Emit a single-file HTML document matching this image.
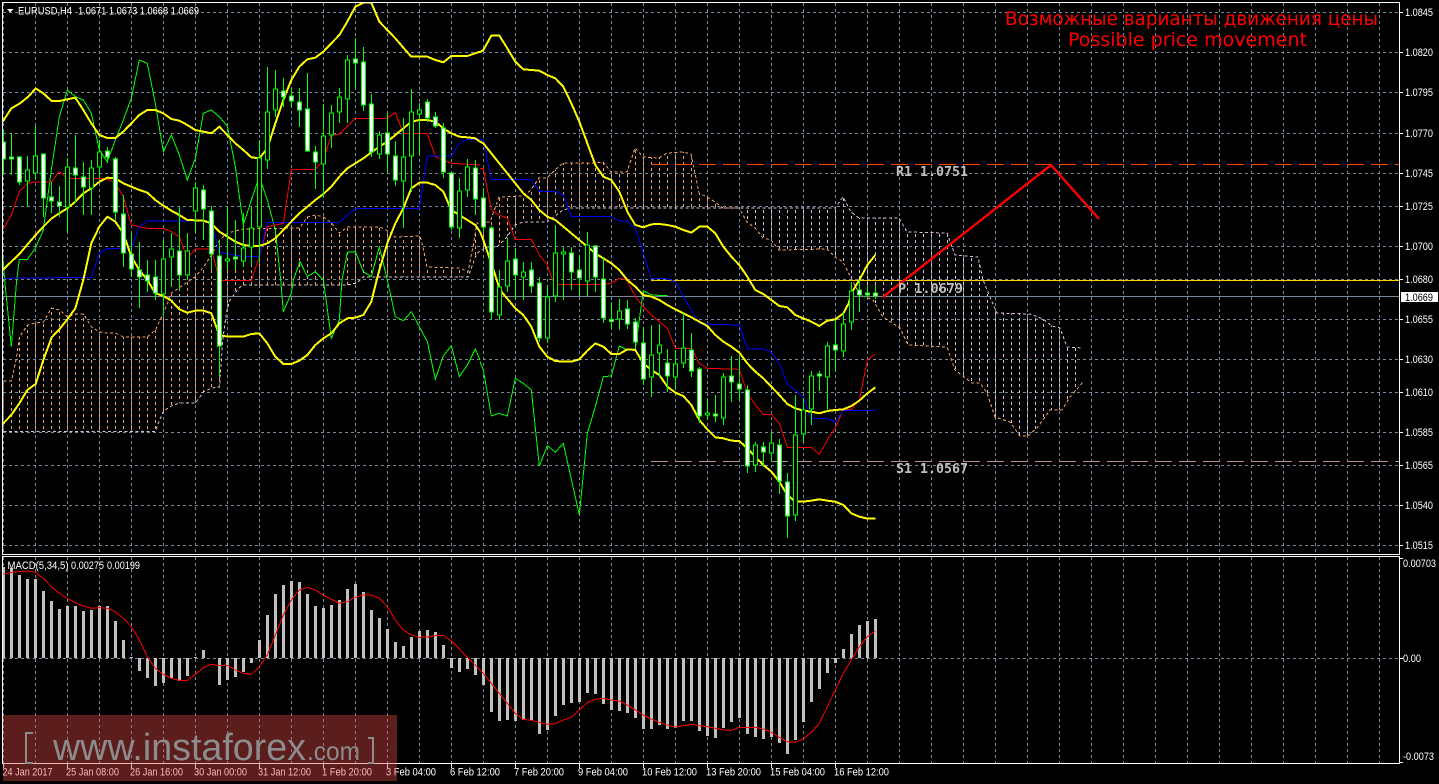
<!DOCTYPE html>
<html><head><meta charset="utf-8"><title>EURUSD,H4</title>
<style>
html,body{margin:0;padding:0;background:#000;width:1439px;height:784px;overflow:hidden}
svg{display:block}
text{font-family:"Liberation Sans",sans-serif;font-size:11px;fill:#fff}
.m{font-family:"DejaVu Sans Mono","Liberation Mono",monospace;font-size:13.5px;font-weight:bold;fill:#c0c0c0}
.big{font-family:"DejaVu Sans","Liberation Sans",sans-serif;font-size:19px;fill:#f00}
.wm{fill:#8c8c8c}
</style></head><body>
<svg width="1439" height="784" viewBox="0 0 1439 784" xmlns="http://www.w3.org/2000/svg">
<defs>
<pattern id="ho" x="0" y="0" width="8" height="6" patternUnits="userSpaceOnUse"><rect x="3" y="0" width="1" height="3" fill="#f4a460"/></pattern>
<pattern id="ht" x="0" y="0" width="8" height="6" patternUnits="userSpaceOnUse"><rect x="3" y="0" width="1" height="3" fill="#d8bfd8"/></pattern>
<clipPath id="c1"><rect x="3" y="3" width="1396" height="551"/></clipPath>
<clipPath id="c2"><rect x="3" y="557" width="1396" height="206"/></clipPath>
</defs>
<rect width="1439" height="784" fill="#000"/>

<!-- main panel -->
<g clip-path="url(#c1)">
<!-- grid -->
<path stroke="#778899" stroke-dasharray="3 3" fill="none" d="M3 12.5H1399M3 52.5H1399M3 92.5H1399M3 133.5H1399M3 173.5H1399M3 206.5H1399M3 246.5H1399M3 279.5H1399M3 319.5H1399M3 359.5H1399M3 392.5H1399M3 432.5H1399M3 465.5H1399M3 505.5H1399M3 545.5H1399"/>
<path stroke="#778899" stroke-dasharray="3 3" fill="none" d="M3.5 3V554M35.5 3V554M67.5 3V554M99.5 3V554M131.5 3V554M163.5 3V554M195.5 3V554M227.5 3V554M259.5 3V554M291.5 3V554M323.5 3V554M355.5 3V554M387.5 3V554M419.5 3V554M451.5 3V554M483.5 3V554M515.5 3V554M547.5 3V554M579.5 3V554M611.5 3V554M643.5 3V554M675.5 3V554M707.5 3V554M739.5 3V554M771.5 3V554M803.5 3V554M835.5 3V554M867.5 3V554M899.5 3V554M931.5 3V554M963.5 3V554M995.5 3V554M1027.5 3V554M1059.5 3V554M1091.5 3V554M1123.5 3V554M1155.5 3V554M1187.5 3V554M1219.5 3V554M1251.5 3V554M1283.5 3V554M1315.5 3V554M1347.5 3V554M1379.5 3V554"/>

<!-- cloud section 1 -->
<polygon fill="url(#ho)" points="3.5,381 11.5,381 16,360 19.5,337 27.5,325 35.5,323 43.5,322 51.5,308 59.5,310 67.5,317 75.5,314 83.5,314 91.5,327 99.5,332 107.5,333 115.5,333 123.5,337 147.5,337 155.5,330 163.5,313 171.5,293 195,277 203.5,267 211.5,255 219.5,240 227.5,233 243.5,229 299.5,228 307.5,217 315.5,215 323.5,217 331.5,223 339.5,233 347.5,227 380,227 390,232 395,237 420,236 423,247 427,267 460,268 468,272 473,247 477,223 490,222 499,197 523,196 531,190 539,178 547,178 555,170 563,163 595,163 603,162 611,172 627,172 635,148 643,157 659,158 667,153 683,152 691,154 699,193 707,197 715,202 723,208 739,208 571,208 563,210 547,222 523,222 515,225 507,237 497,247 487,247 477,253 468,277 363,277 357,283 347,285 243,285 239,288 230,300 227,310 223,337 219.5,387 211.5,388 203.5,392 195.5,403 179.5,403 171.5,406 163.5,411 155,431.5 3.5,431.5"/>
<!-- cloud section 2 -->
<polygon fill="url(#ht)" points="739,208 835,208 843,197 851,212 859,218 899,218 907,232 947,233 955,255 978,257 983,280 990,297 997,313 1030,314 1043,319 1052,326 1060,328 1067,347 1083,348 1083,382 1070,397 1062,410 1050,410 1037,428 1028,436 1020,436 1010,422 995,417 987,393 980,383 972,383 955,370 947,347 908,345 900,328 883,317 873,300 860,295 843,262 835,257 827,249 779,250 771,240 763,238 755,228 747,222"/>
<!-- cloud outlines -->
<g fill="none" stroke-dasharray="3 2.5" shape-rendering="crispEdges">
<polyline stroke="#f4a460" points="3.5,381 11.5,381 16,360 19.5,337 27.5,325 35.5,323 43.5,322 51.5,308 59.5,310 67.5,317 75.5,314 83.5,314 91.5,327 99.5,332 107.5,333 115.5,333 123.5,337 147.5,337 155.5,330 163.5,313 171.5,293 195,277 203.5,267 211.5,255 219.5,240 227.5,233 243.5,229 299.5,228 307.5,217 315.5,215 323.5,217 331.5,223 339.5,233 347.5,227 380,227 390,232 395,237 420,236 423,247 427,267 460,268 468,272 473,247 477,223 490,222 499,197 523,196 531,190 539,178 547,178 555,170 563,163 595,163 603,162 611,172 627,172 635,148 643,157 659,158 667,153 683,152 691,154 699,193 707,197 715,202 723,208 739,208 747,222 755,228 763,238 771,240 779,250 827,249 835,257 843,262 860,295 873,300 883,317 900,328 908,345 947,347 955,370 972,383 980,383 987,393 995,417 1010,422 1020,436 1028,436 1037,428 1050,410 1062,410 1070,397 1083,382"/>
<polyline stroke="#d8bfd8" points="3.5,431.5 155,431.5 163.5,411 171.5,406 179.5,403 195.5,403 203.5,392 211.5,388 219.5,387 223,337 227,310 230,300 239,288 243,285 347,285 357,283 363,277 468,277 477,253 487,247 497,247 507,237 515,225 523,222 547,222 563,210 571,208 835,208 843,197 851,212 859,218 899,218 907,232 947,233 955,255 978,257 983,280 990,297 997,313 1030,314 1043,319 1052,326 1060,328 1067,347 1083,348"/>
</g>

<!-- levels -->
<path stroke="#ff4500" stroke-width="1" fill="none" stroke-dasharray="17 7" d="M651 164.5H1399"/>
<path stroke="#bc8f8f" stroke-width="1" fill="none" stroke-dasharray="17 7" d="M651 461.5H1399"/>
<path stroke="#ffcc00" stroke-width="1" fill="none" d="M651 280.5H1399"/>
<path stroke="#778899" stroke-width="1" fill="none" d="M3 296.5H1399"/>

<!-- indicators left half -->
<g transform="scale(.33333)" fill="none" shape-rendering="crispEdges">
<polyline stroke="#0f0" stroke-width="3" points="8,765 14,840 34,1040 50,840 58,778 82,778 106,745 130,690 154,510 178,350 202,270 226,290 250,300 274,340 298,450 322,485 346,420 370,360 394,295 418,180 442,190 466,310 490,455 514,405 538,465 562,540 586,475 610,340 634,330 658,350 682,378 706,500 730,675 754,600 778,530 802,600 826,690 842,840 850,935 874,880 880,840 900,785 922,830 946,815 970,840 994,1015 1018,960 1026,840 1042,757 1066,755 1090,815 1114,830 1138,740 1162,840 1186,950 1210,962 1234,935 1258,980 1282,1025 1306,1138 1330,1068 1354,1037 1378,1130 1402,1095 1426,1047 1440,1080"/>
<polyline stroke="#f00" stroke-width="3" points="8,690 34,645 58,575 82,550 106,546 154,546 178,515 202,535 298,535 322,537 346,550 370,590 394,675 418,680 442,685 490,685 514,695 538,710 562,775 586,747 634,747 658,840 680,842 754,842 778,770 802,680 850,670 874,508 946,508 970,480 994,405 1018,403 1066,355 1162,355 1186,338 1210,400 1282,400 1306,470 1330,480 1354,490 1440,495"/>
<polyline stroke="#00f" stroke-width="3" points="8,835 274,832 298,760 322,745 394,745 418,680 442,663 610,663 634,670 658,757 730,770 778,770 802,667 1018,667 1066,625 1258,625 1282,468 1354,468 1378,430 1402,418 1440,418"/>
<g stroke="#ff0" stroke-width="6" stroke-linejoin="round">
<polyline points="8,365 34,325 60,310 85,290 107,265 130,280 155,303 178,303 202,298 226,293 250,330 274,370 298,405 322,414 346,414 370,395 394,370 418,345 442,330 466,330 490,340 514,357 538,362 562,375 586,390 610,395 634,400 658,380 682,405 706,430 730,450 754,472 778,475 802,445 826,370 850,300 874,240 898,200 922,178 946,173 970,155 994,130 1018,105 1042,65 1066,20 1090,8 1114,8 1138,65 1162,90 1186,115 1210,143 1234,170 1282,170 1306,180 1330,187 1354,168 1402,168 1426,160 1440,155"/>
<polyline points="8,810 34,785 60,760 85,730 107,705 130,680 155,655 178,640 202,625 226,605 250,580 274,565 298,545 322,533 346,535 370,550 394,560 418,570 442,578 466,600 490,617 514,632 538,645 562,660 610,662 634,670 658,695 682,710 706,725 730,735 754,738 778,738 802,730 826,715 850,690 874,665 898,640 922,620 946,600 970,582 994,560 1018,530 1042,505 1066,490 1090,475 1114,457 1138,440 1162,425 1186,405 1210,385 1234,365 1258,360 1282,360 1306,365 1330,385 1354,400 1378,410 1402,412 1426,415 1440,425"/>
<polyline points="8,1272 34,1245 58,1210 82,1170 107,1152 130,1080 155,1012 178,988 202,958 226,925 240,875 250,840 274,730 298,680 322,650 346,665 370,700 394,770 418,810 442,840 466,880 490,888 514,902 538,928 562,938 586,932 610,932 634,940 658,1005 682,1010 730,1010 754,1002 778,1000 802,1030 826,1070 850,1092 874,1092 898,1082 922,1065 946,1035 970,1015 994,1000 1018,970 1042,955 1066,953 1090,945 1114,905 1130,840 1138,810 1162,730 1186,670 1210,625 1234,565 1258,548 1282,548 1306,555 1330,575 1354,630 1378,645 1402,660 1426,675 1440,695"/>
</g>
</g>

<!-- indicators right half -->
<g transform="translate(480 0) scale(.33333)" fill="none" shape-rendering="crispEdges">
<polyline stroke="#0f0" stroke-width="3" points="0,1085 10,1110 34,1248 58,1240 82,1248 106,1135 130,1150 154,1170 178,1398 202,1337 226,1357 250,1330 298,1545 322,1300 346,1220 370,1130 394,1128 418,1038 442,1050 466,1047 490,872 514,885 562,887"/>
<polyline stroke="#f00" stroke-width="3" points="0,505 10,505 34,630 58,645 82,655 106,718 154,718 178,765 202,795 218,840 234,854 370,854 394,850 418,835 440,840 466,890 490,920 514,945 538,965 562,985 586,1045 634,1045 658,1090 682,1105 778,1108 802,1180 826,1215 850,1243 874,1243 898,1270 922,1342 994,1342 1018,1363 1042,1320 1066,1285 1090,1228 1114,1228 1138,1200 1162,1080 1186,1062"/>
<polyline stroke="#00f" stroke-width="3" points="0,418 10,420 34,538 154,538 178,575 226,575 250,585 274,650 394,650 418,663 442,663 466,685 490,760 514,835 562,835 586,845 610,890 634,930 658,972 778,975 802,1047 850,1047 874,1057 898,1090 922,1152 946,1170 970,1192 994,1255 1042,1255 1066,1267 1090,1231 1186,1231"/>
<g stroke="#ff0" stroke-width="6" stroke-linejoin="round">
<polyline points="0,157 10,150 34,107 58,107 82,145 106,185 130,208 178,212 202,225 226,235 250,260 274,310 298,365 322,430 346,495 370,530 394,540 418,575 442,635 466,675 490,682 514,673 538,672 562,675 586,680 610,690 634,698 658,680 682,680 706,700 730,740 754,770 778,795 802,830 826,870 850,882 874,900 898,918 922,922 946,945 970,955 994,965 1018,978 1042,962 1066,958 1090,940 1106,910 1114,880 1138,840 1162,795 1186,765"/>
<polyline points="0,425 10,430 34,460 58,490 82,520 106,550 130,580 154,600 178,630 202,650 226,660 250,680 274,700 298,720 322,740 346,760 370,775 394,790 418,810 442,840 466,860 490,885 514,890 538,900 562,915 586,928 610,940 634,952 658,965 682,978 706,1005 730,1025 754,1040 778,1058 802,1090 826,1115 850,1135 874,1160 898,1185 922,1212 946,1225 970,1232 994,1235 1018,1240 1042,1233 1066,1230 1090,1228 1114,1218 1138,1202 1162,1180 1186,1162"/>
<polyline points="0,695 10,720 34,790 60,870 106,925 130,945 154,980 178,1040 202,1070 226,1083 250,1085 274,1085 298,1078 322,1052 346,1030 370,1040 394,1062 418,1062 442,1048 466,1050 490,1090 514,1110 538,1125 562,1160 586,1178 610,1188 634,1215 658,1260 682,1288 706,1312 730,1315 754,1322 778,1323 802,1345 826,1370 850,1395 874,1415 898,1445 922,1485 946,1505 970,1505 994,1502 1018,1498 1042,1502 1066,1505 1090,1515 1114,1540 1138,1550 1162,1556 1186,1556"/>
</g>
</g>

<!-- candle wicks -->
<path stroke="#0f0" fill="none" d="M3.5 130V175M11.5 133V175M19.5 156V185M27.5 156V207M35.5 126V180M43.5 154V217M51.5 182V213M59.5 186V217M67.5 158V232M75.5 135V203M83.5 162V215M91.5 160V215M99.5 140V178M107.5 147V163M115.5 157V220M123.5 195V267M131.5 233V277M139.5 242V308M147.5 260V292M155.5 260V300M163.5 240V317M171.5 233V287M179.5 207V290M187.5 233V280M195.5 182V233M203.5 185V240M211.5 206V270M219.5 240V377M227.5 207V270M235.5 220V270M243.5 213V267M251.5 207V265M259.5 140V263M267.5 67V169M275.5 70V117M283.5 78V107M291.5 88V107M299.5 88V127M307.5 73V152M315.5 146V189M323.5 104V198M331.5 105V148M339.5 88V123M347.5 55V123M355.5 38V88M363.5 47V111M371.5 94V157M379.5 131V159M387.5 113V173M395.5 141V186M403.5 118V228M411.5 89V192M419.5 103V155M427.5 99V122M435.5 112V128M443.5 123V178M451.5 172V230M459.5 178V238M467.5 159V197M475.5 160V215M483.5 188V232M491.5 226V319M499.5 270V320M507.5 238V292M515.5 248V300M523.5 262V300M531.5 262V293M539.5 277V342M547.5 285V343M555.5 225V302M563.5 247V300M571.5 247V290M579.5 255V296M587.5 232V296M595.5 245V292M603.5 257V323M611.5 302V329M619.5 299V330M627.5 300V329M635.5 318V347M643.5 327V385M651.5 325V397M659.5 324V377M667.5 349V392M675.5 350V389M683.5 313V368M691.5 333V377M699.5 367V423M707.5 398V420M715.5 395V422M723.5 373V425M731.5 356V402M739.5 355V400M747.5 385V473M755.5 442V472M763.5 442V467M771.5 432V462M779.5 439V494M787.5 473V538M795.5 395V521M803.5 398V442M811.5 371V425M819.5 371V391M827.5 342V411M835.5 320V372M843.5 313V357M851.5 282V330M859.5 280V312M867.5 285V299M875.5 285V299"/>
<!-- hollow bodies -->
<path stroke="#0f0" fill="#000" d="M25.5 170h4v11h-4zM33.5 156h4v17h-4zM65.5 167h4v40h-4zM89.5 168h4v20h-4zM97.5 152h4v15h-4zM161.5 259h4v35h-4zM169.5 249h4v8h-4zM185.5 251h4v24h-4zM193.5 188h4v23h-4zM225.5 259h4v2h-4zM241.5 248h4v13h-4zM249.5 228h4v19h-4zM257.5 158h4v69h-4zM265.5 112h4v48h-4zM273.5 89h4v21h-4zM321.5 136h4v28h-4zM329.5 113h4v22h-4zM337.5 97h4v15h-4zM345.5 60h4v39h-4zM377.5 135h4v19h-4zM401.5 157h4v24h-4zM409.5 112h4v44h-4zM417.5 110h4v4h-4zM457.5 191h4v37h-4zM465.5 167h4v23h-4zM497.5 287h4v28h-4zM505.5 261h4v25h-4zM521.5 272h4v5h-4zM545.5 297h4v41h-4zM553.5 253h4v43h-4zM561.5 252h4v2h-4zM585.5 245h4v36h-4zM617.5 311h4v8h-4zM649.5 355h4v22h-4zM657.5 345h4v8h-4zM673.5 364h4v13h-4zM681.5 348h4v15h-4zM705.5 413h4v2h-4zM721.5 377h4v41h-4zM753.5 445h4v20h-4zM769.5 443h4v10h-4zM793.5 435h4v80h-4zM801.5 410h4v24h-4zM809.5 376h4v33h-4zM825.5 346h4v31h-4zM841.5 324h4v27h-4zM849.5 291h4v31h-4z"/>
<!-- white bodies -->
<path stroke="#0f0" fill="#fff" d="M1.5 142h4v17h-4zM9.5 157h4v2h-4zM17.5 157h4v25h-4zM41.5 154h4v44h-4zM49.5 197h4v4h-4zM57.5 202h4v4h-4zM73.5 168h4v7h-4zM81.5 177h4v10h-4zM105.5 151h4v6h-4zM113.5 159h4v53h-4zM121.5 214h4v39h-4zM129.5 254h4v15h-4zM137.5 270h4v7h-4zM145.5 275h4v6h-4zM153.5 277h4v16h-4zM177.5 251h4v24h-4zM201.5 190h4v19h-4zM209.5 211h4v43h-4zM217.5 256h4v90h-4zM233.5 257h4v2h-4zM281.5 91h4v6h-4zM289.5 96h4v5h-4zM297.5 102h4v8h-4zM305.5 109h4v42h-4zM313.5 152h4v10h-4zM353.5 59h4v4h-4zM361.5 62h4v43h-4zM369.5 104h4v48h-4zM385.5 133h4v21h-4zM393.5 156h4v24h-4zM425.5 102h4v16h-4zM433.5 117h4v9h-4zM441.5 128h4v44h-4zM449.5 173h4v54h-4zM473.5 168h4v31h-4zM481.5 198h4v29h-4zM489.5 228h4v84h-4zM513.5 259h4v16h-4zM529.5 270h4v16h-4zM537.5 283h4v55h-4zM569.5 253h4v19h-4zM577.5 270h4v8h-4zM593.5 246h4v31h-4zM601.5 279h4v39h-4zM609.5 319.5h4v2h-4zM625.5 309h4v15h-4zM633.5 322h4v20h-4zM641.5 343h4v36h-4zM665.5 363h4v13h-4zM689.5 350h4v21h-4zM697.5 369h4v47h-4zM713.5 414h4v2h-4zM729.5 376h4v6h-4zM737.5 384h4v5h-4zM745.5 390h4v76h-4zM761.5 447h4v5h-4zM777.5 445h4v36h-4zM785.5 482h4v34h-4zM817.5 374h4v2h-4zM833.5 345h4v5h-4zM857.5 290h4v5h-4zM865.5 293h4v2h-4zM873.5 293h4v3h-4z"/>

<!-- red projection -->
<polyline fill="none" stroke="#f00" stroke-width="2.4" stroke-linejoin="miter" points="883,297 1051,165 1099,219"/>
</g>

<!-- level labels -->
<text class="m" x="896" y="176" textLength="72" lengthAdjust="spacingAndGlyphs">R1 1.0751</text>
<text class="m" x="898" y="293" textLength="65" lengthAdjust="spacingAndGlyphs">P 1.0679</text>
<text class="m" x="896" y="473" textLength="72" lengthAdjust="spacingAndGlyphs">S1 1.0567</text>

<!-- headline -->
<text class="big" x="1005" y="25" textLength="373" lengthAdjust="spacingAndGlyphs">Возможные варианты движения цены</text>
<text class="big" x="1068" y="46" textLength="239" lengthAdjust="spacingAndGlyphs">Possible price movement</text>

<!-- header -->
<polygon points="7,9 13.5,9 10.2,12.5" fill="#fff"/>
<text x="18" y="14.5" textLength="54" lengthAdjust="spacingAndGlyphs">EURUSD,H4</text>
<text x="78" y="14.5" textLength="121" lengthAdjust="spacingAndGlyphs">1.0671 1.0673 1.0668 1.0669</text>

<!-- MACD panel -->
<g clip-path="url(#c2)">
<path stroke="#778899" stroke-dasharray="3 3" fill="none" d="M3 658.5H1399"/>
<path stroke="#778899" stroke-dasharray="3 3" fill="none" d="M3.5 557V763M35.5 557V763M67.5 557V763M99.5 557V763M131.5 557V763M163.5 557V763M195.5 557V763M227.5 557V763M259.5 557V763M291.5 557V763M323.5 557V763M355.5 557V763M387.5 557V763M419.5 557V763M451.5 557V763M483.5 557V763M515.5 557V763M547.5 557V763M579.5 557V763M611.5 557V763M643.5 557V763M675.5 557V763M707.5 557V763M739.5 557V763M771.5 557V763M803.5 557V763M835.5 557V763M867.5 557V763M899.5 557V763M931.5 557V763M963.5 557V763M995.5 557V763M1027.5 557V763M1059.5 557V763M1091.5 557V763M1123.5 557V763M1155.5 557V763M1187.5 557V763M1219.5 557V763M1251.5 557V763M1283.5 557V763M1315.5 557V763M1347.5 557V763M1379.5 557V763"/>
<path stroke="#c0c0c0" stroke-width="3" fill="none" d="M3.5 658V567M11.5 658V568M19.5 658V575M27.5 658V579M35.5 658V579M43.5 658V591M51.5 658V601M59.5 658V609M67.5 658V606M75.5 658V606M83.5 658V611M91.5 658V610M99.5 658V606M107.5 658V606M115.5 658V621M123.5 658V640M131.5 658V657M139.5 658V671M147.5 658V678M155.5 658V686M163.5 658V683M171.5 658V678M179.5 658V681M187.5 658V676M195.5 658V657M203.5 658V650M219.5 658V685M227.5 658V680M235.5 658V677M243.5 658V672M251.5 658V663M259.5 658V640M267.5 658V615M275.5 658V594M283.5 658V585M291.5 658V581M299.5 658V582M307.5 658V594M315.5 658V606M323.5 658V608M331.5 658V605M339.5 658V600M347.5 658V589M355.5 658V584M363.5 658V592M371.5 658V610M379.5 658V618M387.5 658V629M395.5 658V642M403.5 658V646M411.5 658V637M419.5 658V631M427.5 658V630M435.5 658V632M443.5 658V645M451.5 658V668M459.5 658V672M467.5 658V669M475.5 658V675M483.5 658V685M491.5 658V712M499.5 658V721M507.5 658V720M515.5 658V721M523.5 658V720M531.5 658V720M539.5 658V734M547.5 658V730M555.5 658V716M563.5 658V705M571.5 658V703M579.5 658V702M587.5 658V693M595.5 658V694M603.5 658V704M611.5 658V710M619.5 658V711M627.5 658V713M635.5 658V718M643.5 658V729M651.5 658V729M659.5 658V725M667.5 658V729M675.5 658V728M683.5 658V721M691.5 658V721M699.5 658V731M707.5 658V736M715.5 658V738M723.5 658V728M731.5 658V722M739.5 658V718M747.5 658V734M755.5 658V737M763.5 658V739M771.5 658V737M779.5 658V743M787.5 658V754M795.5 658V740M803.5 658V722M811.5 658V702M819.5 658V689M827.5 658V673M835.5 658V663M843.5 658V649M851.5 658V634M859.5 658V625M867.5 658V621M875.5 658V619"/>
<g transform="translate(0 555) scale(.33333)" fill="none" stroke="#f00" stroke-width="3" shape-rendering="crispEdges">
<polyline points="8,58 34,52 58,50 82,48 106,52 130,70 154,95 178,115 202,130 226,143 250,153 274,160 298,158 322,160 346,170 370,190 394,215 418,255 442,305 466,340 490,358 514,370 538,376 562,376 586,358 610,338 634,328 658,332 682,331 706,345 730,355 754,358 778,335 802,300 826,240 850,180 874,135 898,105 922,97 946,105 970,120 994,133 1018,145 1042,140 1066,127 1090,120 1114,120 1138,130 1162,155 1186,195 1210,225 1234,240 1258,247 1282,246 1306,242 1330,241 1354,258 1378,282 1402,307 1426,330 1440,345"/>
</g>
<g transform="translate(480 555) scale(.33333)" fill="none" stroke="#f00" stroke-width="3" shape-rendering="crispEdges">
<polyline points="0,345 10,355 34,385 58,415 82,445 106,475 130,493 154,496 178,502 202,508 226,506 250,495 274,487 298,465 322,443 346,433 370,430 394,435 418,438 442,450 466,465 490,480 514,492 538,502 562,510 586,516 610,512 634,508 658,512 682,515 706,520 730,525 754,526 778,517 826,517 850,522 874,532 898,547 922,560 946,562 970,552 994,532 1018,505 1042,455 1066,405 1090,355 1114,315 1138,275 1162,245 1186,228"/>
</g>
</g>
<text x="7.5" y="569" textLength="61" lengthAdjust="spacingAndGlyphs">MACD(5,34,5)</text>
<text x="71" y="569" textLength="33" lengthAdjust="spacingAndGlyphs">0.00275</text>
<text x="107" y="569" textLength="33" lengthAdjust="spacingAndGlyphs">0.00199</text>

<!-- frames -->
<path fill="none" stroke="#fff" d="M2.5 2.5H1399.5V554.5H2.5ZM2.5 556.5H1399.5V763.5H2.5Z"/>

<!-- right ticks -->
<path stroke="#fff" fill="none" d="M1400 12.5h3M1400 52.5h3M1400 92.5h3M1400 133.5h3M1400 173.5h3M1400 206.5h3M1400 246.5h3M1400 279.5h3M1400 319.5h3M1400 359.5h3M1400 392.5h3M1400 432.5h3M1400 465.5h3M1400 505.5h3M1400 545.5h3M1400 558.5h3M1400 658.5h3M1400 762.5h3"/>
<!-- bottom ticks -->
<path stroke="#fff" fill="none" d="M3.5 764v4M67.5 764v4M131.5 764v4M195.5 764v4M259.5 764v4M323.5 764v4M387.5 764v4M451.5 764v4M515.5 764v4M579.5 764v4M643.5 764v4M707.5 764v4M771.5 764v4M835.5 764v4"/>

<!-- price axis -->
<g>
<text x="1405" y="16" textLength="28" lengthAdjust="spacingAndGlyphs">1.0845</text>
<text x="1405" y="56" textLength="28" lengthAdjust="spacingAndGlyphs">1.0820</text>
<text x="1405" y="96" textLength="28" lengthAdjust="spacingAndGlyphs">1.0795</text>
<text x="1405" y="137" textLength="28" lengthAdjust="spacingAndGlyphs">1.0770</text>
<text x="1405" y="177" textLength="28" lengthAdjust="spacingAndGlyphs">1.0745</text>
<text x="1405" y="210" textLength="28" lengthAdjust="spacingAndGlyphs">1.0725</text>
<text x="1405" y="250" textLength="28" lengthAdjust="spacingAndGlyphs">1.0700</text>
<text x="1405" y="283" textLength="28" lengthAdjust="spacingAndGlyphs">1.0680</text>
<text x="1405" y="323" textLength="28" lengthAdjust="spacingAndGlyphs">1.0655</text>
<text x="1405" y="363" textLength="28" lengthAdjust="spacingAndGlyphs">1.0630</text>
<text x="1405" y="396" textLength="28" lengthAdjust="spacingAndGlyphs">1.0610</text>
<text x="1405" y="436" textLength="28" lengthAdjust="spacingAndGlyphs">1.0585</text>
<text x="1405" y="469" textLength="28" lengthAdjust="spacingAndGlyphs">1.0565</text>
<text x="1405" y="509" textLength="28" lengthAdjust="spacingAndGlyphs">1.0540</text>
<text x="1405" y="549" textLength="28" lengthAdjust="spacingAndGlyphs">1.0515</text>
<rect x="1401" y="292" width="37" height="10" fill="#fff"/>
<text x="1405" y="301" textLength="28" lengthAdjust="spacingAndGlyphs" style="fill:#000">1.0669</text>
<text x="1403" y="567" textLength="33" lengthAdjust="spacingAndGlyphs">0.00703</text>
<text x="1403" y="662" textLength="18" lengthAdjust="spacingAndGlyphs">0.00</text>
<text x="1403" y="760" textLength="31" lengthAdjust="spacingAndGlyphs">-0.0073</text>
</g>

<!-- time axis -->
<g>
<text x="2.5" y="775.5" textLength="50" lengthAdjust="spacingAndGlyphs">24 Jan 2017</text>
<text x="66" y="775.5" textLength="53" lengthAdjust="spacingAndGlyphs">25 Jan 08:00</text>
<text x="130" y="775.5" textLength="53" lengthAdjust="spacingAndGlyphs">26 Jan 16:00</text>
<text x="194" y="775.5" textLength="53" lengthAdjust="spacingAndGlyphs">30 Jan 00:00</text>
<text x="258" y="775.5" textLength="53" lengthAdjust="spacingAndGlyphs">31 Jan 12:00</text>
<text x="322" y="775.5" textLength="50" lengthAdjust="spacingAndGlyphs">1 Feb 20:00</text>
<text x="386" y="775.5" textLength="50" lengthAdjust="spacingAndGlyphs">3 Feb 04:00</text>
<text x="450" y="775.5" textLength="50" lengthAdjust="spacingAndGlyphs">6 Feb 12:00</text>
<text x="514" y="775.5" textLength="50" lengthAdjust="spacingAndGlyphs">7 Feb 20:00</text>
<text x="578" y="775.5" textLength="50" lengthAdjust="spacingAndGlyphs">9 Feb 04:00</text>
<text x="642" y="775.5" textLength="55" lengthAdjust="spacingAndGlyphs">10 Feb 12:00</text>
<text x="706" y="775.5" textLength="55" lengthAdjust="spacingAndGlyphs">13 Feb 20:00</text>
<text x="770" y="775.5" textLength="55" lengthAdjust="spacingAndGlyphs">15 Feb 04:00</text>
<text x="834" y="775.5" textLength="55" lengthAdjust="spacingAndGlyphs">16 Feb 12:00</text>
</g>

<!-- watermark -->
<rect x="3" y="715" width="394" height="66" fill="#e64848" fill-opacity=".4"/>
<g>
<path fill="none" stroke="#8c8c8c" stroke-width="2" d="M33 733H26V763H33M368 738H373V763H368"/>
<text class="wm" x="53" y="760" style="font-size:38px" textLength="253" lengthAdjust="spacingAndGlyphs">www.instaforex</text>
<text class="wm" x="307" y="760" style="font-size:26px" textLength="53" lengthAdjust="spacingAndGlyphs">.com</text>
</g>
</svg>
</body></html>
